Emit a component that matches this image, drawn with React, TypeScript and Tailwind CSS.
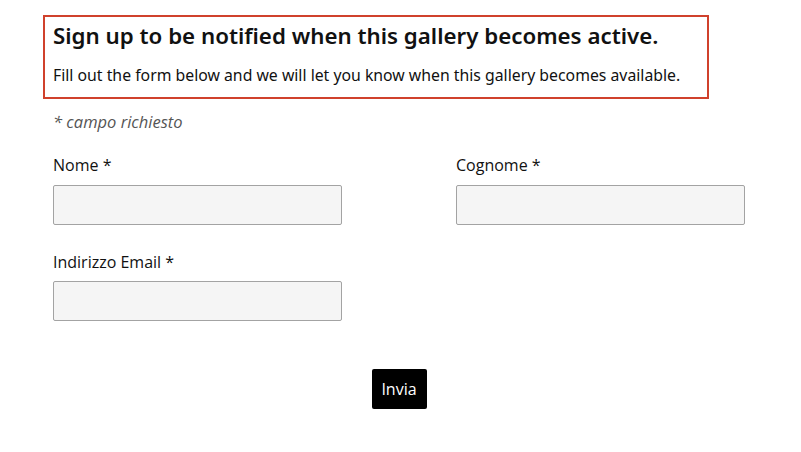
export default function App() {
  const inputCls =
    "h-[40px] w-full rounded-[2px] border border-[#a3a3a3] bg-[#f5f5f5]";
  const labelCls = "text-[16px] leading-[20px] text-[#111]";

  return (
    <div className="min-h-[452px] w-[801px] bg-white font-['Open_Sans',sans-serif]">
      <div className="pl-[43px] pt-[15px]">
        <div className="w-[666px] border-2 border-[#d0412c] px-[8px] pb-[12px] pt-[4px]">
          <h2 className="font-['Noto_Sans',sans-serif] text-[22.3px] font-semibold leading-[30px] text-[#111]">
            Sign up to be notified when this gallery becomes active.
          </h2>
          <p className="mt-[14px] font-['Noto_Sans',sans-serif] text-[15.8px] leading-[20px] text-[#111]">
            Fill out the form below and we will let you know when this gallery becomes available.
          </p>
        </div>
      </div>

      <div className="w-[692px] pl-[53px] box-content">
        <p className="mt-[13px] text-[16.5px] italic leading-[20px] text-[#555]">
          * campo richiesto
        </p>

        <div className="mt-[23px] grid grid-cols-[289px_289px] justify-between">
          <div>
            <div className={labelCls}>Nome *</div>
            <div className={`mt-[10px] ${inputCls}`} />
          </div>
          <div>
            <div className={labelCls}>Cognome *</div>
            <div className={`mt-[10px] ${inputCls}`} />
          </div>
        </div>

        <div className="mt-[27px] w-[289px]">
          <div className={labelCls}>Indirizzo Email *</div>
          <div className={`mt-[9px] ${inputCls}`} />
        </div>

        <div className="mt-[48px] flex justify-center">
          <button className="h-[40px] w-[55px] rounded-[2px] bg-black text-[16px] text-white">
            Invia
          </button>
        </div>
      </div>
    </div>
  );
}
